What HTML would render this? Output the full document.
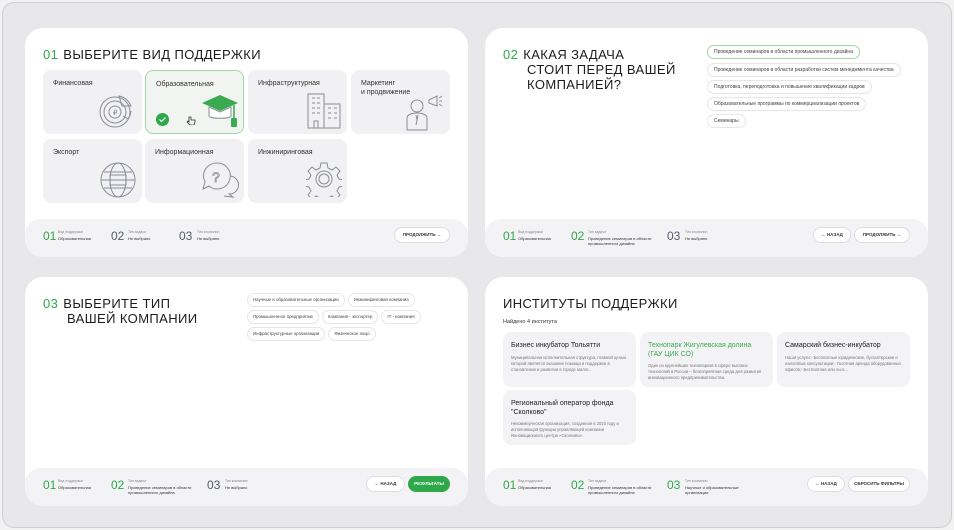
<!DOCTYPE html>
<html><head><meta charset="utf-8"><style>
*{box-sizing:border-box;margin:0;padding:0}
body{width:954px;height:530px;background:#f2f2f3;font-family:"Liberation Sans",sans-serif;color:#222;position:relative;overflow:hidden}
.frame{position:absolute;left:2px;top:2px;width:950px;height:526px;border:1px solid #cfcfd2;border-radius:12px;background:#e8e8ea}
.p{position:absolute;width:443px;height:229px;background:#fff;border-radius:18px;overflow:hidden}
.ft{position:absolute;left:0;right:0;bottom:0;height:38px;background:#f3f3f5;border-radius:16px 16px 0 0}
.h{position:absolute;font-size:13px;letter-spacing:.4px;line-height:15px;color:#1c1c1c}
.h b{font-weight:normal;color:#2ea84a;margin-right:5px}
.card{position:absolute;width:99px;height:64px;background:#f1f1f3;border-radius:8px;font-size:7px;color:#333;padding:9px 10px;line-height:9px}
.card svg{position:absolute}
.st{position:absolute;top:10px;font-size:12px;color:#555a6e}
.st.g{color:#2ea84a}
.sl{position:absolute;top:11px;font-size:3.5px;color:#888;line-height:5px}
.sv{position:absolute;top:17px;font-size:4px;color:#333;line-height:5px}
.btn{position:absolute;top:8px;height:16px;border:1px solid #dedee2;border-radius:9px;background:#fff;font-size:4.5px;font-weight:bold;color:#333;text-align:center;line-height:14px}
.chip{position:absolute;height:14px;border:1px solid #e6e6ea;border-radius:8px;font-size:5px;color:#444;line-height:12px;padding:0 6px;white-space:nowrap}
.chips{position:absolute;left:222px;top:16px;width:205px;display:flex;flex-wrap:wrap;gap:3px}
.chips span{height:14px;border:1px solid #e6e6ea;border-radius:8px;font-size:4.4px;color:#444;line-height:12px;padding:0 5px;white-space:nowrap}
.ic{position:absolute;width:133px;height:55px;background:#f3f3f5;border-radius:8px;padding:9px 8px}
.ic .t{font-size:7px;color:#222;line-height:9px}
.ic .d{font-size:4.2px;color:#777;line-height:6px;margin-top:5px}
</style></head><body>
<div class="frame"></div>

<!-- Panel 1 -->
<div class="p" style="left:25px;top:28px">
<div class="h" style="left:18px;top:19px"><b>01</b>ВЫБЕРИТЕ ВИД ПОДДЕРЖКИ</div>
<div class="card" style="left:18px;top:42px">Финансовая
<svg style="left:54px;top:20px" width="40" height="40" viewBox="0 0 40 40" fill="none" stroke="#8a8d9a" stroke-width="1"><circle cx="18" cy="22" r="15"/><circle cx="18" cy="22" r="11"/><circle cx="18" cy="22" r="6"/><path d="M22 6a16 16 0 0 1 12 10h-9z"/><path d="M34 21a16 16 0 0 1-3 8l-5-3"/><text x="16" y="25" font-size="7" fill="#8a8d9a" stroke="none">₽</text></svg></div>
<div class="card" style="left:120px;top:42px;background:#f1f4f1;border:1px solid #9fd9a8">Образовательная
<svg style="left:54px;top:22px" width="40" height="38" viewBox="0 0 40 38"><path d="M2 10L20 2l18 8-18 8z" fill="#3aaa50"/><path d="M9 14v9c0 3 22 3 22 0v-9l-11 5z" fill="#fff" stroke="#8a8d9a" stroke-width="1"/><path d="M34 12v14" stroke="#3aaa50" stroke-width="1.5"/><rect x="31" y="25" width="6" height="9" rx="1" fill="#3aaa50"/></svg>
<svg style="left:10px;top:42px" width="13" height="13"><circle cx="6.5" cy="6.5" r="6.5" fill="#2ea84a"/><path d="M3.5 6.5l2 2 4-4" stroke="#fff" stroke-width="1.2" fill="none"/></svg>
<svg style="left:40px;top:44px" width="10" height="10" viewBox="0 0 10 10" fill="none" stroke="#333" stroke-width=".8"><path d="M3 2v5l-1-1-1 1 3 3h4l1-3V5H5V2z"/></svg></div>
<div class="card" style="left:223px;top:42px">Инфраструктурная
<svg style="left:58px;top:22px" width="36" height="38" viewBox="0 0 36 38" fill="none" stroke="#8a8d9a" stroke-width="1"><rect x="2" y="2" width="16" height="34"/><rect x="18" y="12" width="16" height="24"/><path d="M6 6h3M11 6h3M6 11h3M11 11h3M6 16h3M11 16h3M6 21h3M11 21h3M22 16h3M28 16h3M22 21h3M28 21h3M22 26h3M28 26h3M8 36v-7h4v7"/></svg></div>
<div class="card" style="left:326px;top:42px">Маркетинг<br>и продвижение
<svg style="left:52px;top:24px" width="40" height="38" viewBox="0 0 40 38" fill="none" stroke="#8a8d9a" stroke-width="1"><circle cx="14" cy="12" r="6"/><path d="M4 36V24c0-3 4-5 10-5s10 2 10 5v12z"/><path d="M13 21l1 5-1 5M15 21l-1 5"/><path d="M26 6l8-4v10l-8-3z"/><path d="M36 4l3-2M36 7h3M36 10l3 2"/></svg></div>
<div class="card" style="left:18px;top:111px">Экспорт
<svg style="left:56px;top:22px" width="38" height="38" viewBox="0 0 38 38" fill="none" stroke="#8a8d9a" stroke-width="1"><circle cx="19" cy="19" r="17"/><ellipse cx="19" cy="19" rx="8" ry="17"/><path d="M2 19h34M5 11h28M5 27h28"/><rect x="11" y="14" width="16" height="10"/></svg></div>
<div class="card" style="left:120px;top:111px">Информационная
<svg style="left:56px;top:22px" width="38" height="38" viewBox="0 0 38 38" fill="none" stroke="#8a8d9a" stroke-width="1"><path d="M16 2a13 13 0 1 1-8 23l-6 3 2-7A13 13 0 0 1 16 2z"/><path d="M29 15a9 9 0 0 1-1 18l4 3-9-1"/><text x="11" y="21" font-size="14" fill="none" stroke="#8a8d9a" stroke-width=".8">?</text></svg></div>
<div class="card" style="left:223px;top:111px">Инжиниринговая
<svg style="left:58px;top:22px" width="36" height="36" viewBox="0 0 36 36" fill="none" stroke="#8a8d9a" stroke-width="1"><path d="M15 2h6l1 5 4 2 4-3 4 4-3 4 2 4 5 1v6l-5 1-2 4 3 4-4 4-4-3-4 2-1 5h-6l-1-5-4-2-4 3-4-4 3-4-2-4-5-1v-6l5-1 2-4-3-4 4-4 4 3 4-2z"/><circle cx="18" cy="18" r="8"/><circle cx="18" cy="18" r="5"/></svg></div>
<div class="ft">
<span class="st g" style="left:18px">01</span><span class="sl" style="left:33px">Вид поддержки</span><span class="sv" style="left:33px">Образовательная</span>
<span class="st" style="left:86px">02</span><span class="sl" style="left:103px">Тип задачи</span><span class="sv" style="left:103px">Не выбрано</span>
<span class="st" style="left:154px">03</span><span class="sl" style="left:172px">Тип компании</span><span class="sv" style="left:172px">Не выбрано</span>
<span class="btn" style="left:369px;width:56px">ПРОДОЛЖИТЬ →</span>
</div></div>

<!-- Panel 2 -->
<div class="p" style="left:485px;top:28px">
<div class="h" style="left:18px;top:19px"><b>02</b>КАКАЯ ЗАДАЧА<br><span style="margin-left:24px">СТОИТ ПЕРЕД ВАШЕЙ</span><br><span style="margin-left:24px">КОМПАНИЕЙ?</span></div>
<span class="chip" style="left:222px;top:17px;border-color:#9fd9a8">Проведение семинаров в области промышленного дизайна</span>
<span class="chip" style="left:222px;top:35px">Проведение семинаров в области разработки систем менеджмента качества</span>
<span class="chip" style="left:222px;top:52px">Подготовка, переподготовка и повышение квалификации кадров</span>
<span class="chip" style="left:222px;top:69px">Образовательные программы по коммерциализации проектов</span>
<span class="chip" style="left:222px;top:86px">Семинары</span>
<div class="ft">
<span class="st g" style="left:18px">01</span><span class="sl" style="left:33px">Вид поддержки</span><span class="sv" style="left:33px">Образовательная</span>
<span class="st g" style="left:86px">02</span><span class="sl" style="left:103px">Тип задачи</span><span class="sv" style="left:103px">Проведение семинаров в области<br>промышленного дизайна</span>
<span class="st" style="left:182px">03</span><span class="sl" style="left:200px">Тип компании</span><span class="sv" style="left:200px">Не выбрано</span>
<span class="btn" style="left:328px;width:38px">← НАЗАД</span>
<span class="btn" style="left:369px;width:56px">ПРОДОЛЖИТЬ →</span>
</div></div>

<!-- Panel 3 -->
<div class="p" style="left:25px;top:277px">
<div class="h" style="left:18px;top:19px"><b>03</b>ВЫБЕРИТЕ ТИП<br><span style="margin-left:24px">ВАШЕЙ КОМПАНИИ</span></div>
<div class="chips">
<span>Научные и образовательные организации</span><span>Инжиниринговая компания</span>
<span>Промышленное предприятие</span><span>Компания - экспортер</span><span>IT - компания</span>
<span>Инфраструктурные организации</span><span>Физическое лицо</span>
</div>
<div class="ft">
<span class="st g" style="left:18px">01</span><span class="sl" style="left:33px">Вид поддержки</span><span class="sv" style="left:33px">Образовательная</span>
<span class="st g" style="left:86px">02</span><span class="sl" style="left:103px">Тип задачи</span><span class="sv" style="left:103px">Проведение семинаров в области<br>промышленного дизайна</span>
<span class="st" style="left:182px">03</span><span class="sl" style="left:200px">Тип компании</span><span class="sv" style="left:200px">Не выбрано</span>
<span class="btn" style="left:341px;width:39px">← НАЗАД</span>
<span class="btn" style="left:383px;width:42px;background:#2ea84a;border-color:#2ea84a;color:#fff">РЕЗУЛЬТАТЫ</span>
</div></div>

<!-- Panel 4 -->
<div class="p" style="left:485px;top:277px">
<div class="h" style="left:18px;top:19px">ИНСТИТУТЫ ПОДДЕРЖКИ</div>
<div style="position:absolute;left:18px;top:42px;font-size:5.5px;color:#333">Найдено 4 института</div>
<div class="ic" style="left:18px;top:55px"><div class="t">Бизнес инкубатор Тольятти</div><div class="d">Муниципальная исполнительная структура, главной целью которой является оказание помощи и поддержки в становлении и развитии в городе малог...</div></div>
<div class="ic" style="left:155px;top:55px"><div class="t" style="color:#3aaa50">Технопарк Жигулевская долина (ГАУ ЦИК СО)</div><div class="d" style="margin-top:4px">Один из крупнейших технопарков в сфере высоких технологий в России – благоприятная среда для развития инновационного предпринимательства.</div></div>
<div class="ic" style="left:292px;top:55px"><div class="t">Самарский бизнес-инкубатор</div><div class="d">Наши услуги:- Бесплатные юридические, бухгалтерские и налоговые консультации;- Льготная аренда оборудованных офисов;- Бесплатная или льго...</div></div>
<div class="ic" style="left:18px;top:113px"><div class="t">Региональный оператор фонда "Сколково"</div><div class="d" style="margin-top:4px">Некоммерческая организация, созданная в 2010 году и исполняющая функции управляющей компании Инновационного центра «Сколково».</div></div>
<div class="ft">
<span class="st g" style="left:18px">01</span><span class="sl" style="left:33px">Вид поддержки</span><span class="sv" style="left:33px">Образовательная</span>
<span class="st g" style="left:86px">02</span><span class="sl" style="left:103px">Тип задачи</span><span class="sv" style="left:103px">Проведение семинаров в области<br>промышленного дизайна</span>
<span class="st g" style="left:182px">03</span><span class="sl" style="left:200px">Тип компании</span><span class="sv" style="left:200px">Научные и образовательные<br>организации</span>
<span class="btn" style="left:322px;width:38px">← НАЗАД</span>
<span class="btn" style="left:363px;width:62px">СБРОСИТЬ ФИЛЬТРЫ</span>
</div></div>
</body></html>
